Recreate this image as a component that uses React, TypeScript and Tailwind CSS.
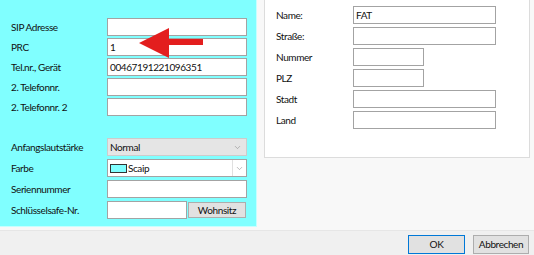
import { ChevronDown } from "lucide-react";

const leftTop = [
  { label: "SIP Adresse", value: "" },
  { label: "PRC", value: "1" },
  { label: "Tel.nr., Gerät", value: "00467191221096351" },
  { label: "2. Telefonnr.", value: "" },
  { label: "2. Telefonnr. 2", value: "" },
];

const address = [
  { label: "Name:", value: "FAT", short: false },
  { label: "Straße:", value: "", short: false },
  { label: "Nummer", value: "", short: true },
  { label: "PLZ", value: "", short: true },
  { label: "Stadt", value: "", short: false },
  { label: "Land", value: "", short: false },
];

function Field({ value = "", className = "w-[140px]" }: { value?: string; className?: string }) {
  return (
    <div className={`h-full bg-white border border-[#a3a3a3] pl-[2px] flex items-center ${className}`}>
      {value}
    </div>
  );
}

export default function App() {
  return (
    <div className="w-[534px] h-[255px] bg-[#f0f0f0] flex flex-col overflow-hidden text-[10px] tracking-[-0.4px] text-[#111] font-['Lato',sans-serif]">
      <div className="h-[230px] flex bg-[#f8f8f8]">
        {/* Left cyan group */}
        <div className="relative w-[257px] h-[227px] bg-[#80ffff] border-r border-b border-[#c6ffff] pl-[11px] pt-[18px] flex flex-col">
          <div className="flex flex-col gap-[2px]">
            {leftTop.map((r) => (
              <div key={r.label} className="flex items-center h-[18px]">
                <span className="w-[96px]">{r.label}</span>
                <Field value={r.value} />
              </div>
            ))}
          </div>

          <div className="flex flex-col gap-[3px] mt-[22px]">
            <div className="flex items-center h-[18px]">
              <span className="w-[96px]">Anfangslautstärke</span>
              <div className="w-[140px] h-full bg-[#e5e5e5] border border-[#cccccc] pl-[2px] pr-[4px] flex items-center justify-between">
                <span>Normal</span>
                <ChevronDown className="w-[9px] h-[9px] text-[#8a8a8a]" strokeWidth={1.5} />
              </div>
            </div>
            <div className="flex items-center h-[18px]">
              <span className="w-[96px]">Farbe</span>
              <div className="w-[140px] h-full bg-white border border-[#a3a3a3] flex items-center">
                <div className="flex-1 flex items-center pl-[2px] gap-[1px]">
                  <span className="w-[17px] h-[9px] bg-[#80ffff] border border-[#333]" />
                  <span>Scaip</span>
                </div>
                <div className="w-[14px] h-full border-l border-[#e0e0e0] flex items-center justify-center">
                  <ChevronDown className="w-[9px] h-[9px] text-[#8a8a8a]" strokeWidth={1.5} />
                </div>
              </div>
            </div>
            <div className="flex items-center h-[18px]">
              <span className="w-[96px]">Seriennummer</span>
              <Field />
            </div>
            <div className="flex items-center h-[18px]">
              <span className="w-[96px]">Schlüsselsafe-Nr.</span>
              <Field className="w-[80px]" />
              <button className="ml-px w-[58px] h-[16px] bg-[#e1e1e1] border border-[#adadad] flex items-center justify-center">
                Wohnsitz
              </button>
            </div>
          </div>

          {/* red arrow pointing at PRC */}
          <svg className="absolute left-[139px] top-[28px]" width="66" height="30" viewBox="0 0 66 30">
            <polygon points="0,15 30,0 30,11 64,11 64,17 30,17 30,30" fill="#e31e1e" />
          </svg>
        </div>

        {/* Right address group */}
        <div className="ml-[7px] w-[266px] h-[158px] bg-white border border-t-0 border-[#dcdcdc] pl-[11px] pt-[6px] flex flex-col gap-[3px]">
          {address.map((r) => (
            <div key={r.label} className="flex items-center h-[18px]">
              <span className="w-[77px]">{r.label}</span>
              <Field value={r.value} className={r.short ? "w-[71px]" : "w-[143px]"} />
            </div>
          ))}
        </div>
      </div>

      {/* Button bar */}
      <div className="flex-1 border-t border-[#e6e6e6] flex justify-end items-start pt-[4px] pr-[5px] gap-[8px]">
        <button className="w-[57px] h-[19px] bg-[#e1e1e1] border border-[#0078d7] flex items-center justify-center">
          OK
        </button>
        <button className="w-[56px] h-[19px] bg-[#e1e1e1] border border-[#adadad] flex items-center justify-center">
          Abbrechen
        </button>
      </div>
    </div>
  );
}
